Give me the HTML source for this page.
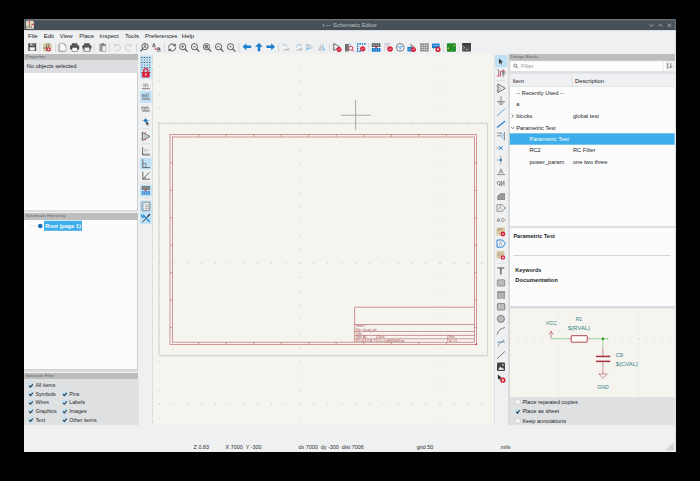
<!DOCTYPE html>
<html><head><meta charset="utf-8">
<style>
*{margin:0;padding:0;box-sizing:border-box}
html,body{width:700px;height:481px;overflow:hidden;background:#000}
body{position:relative;font-family:"Liberation Sans",sans-serif;color:#232629}
.a{position:absolute}
.t{position:absolute;white-space:nowrap;font-size:5.8px;line-height:1}
#win{position:absolute;left:24px;top:19px;width:651.6px;height:433px;background:#eff0f1;border-radius:2px 2px 0 0;overflow:hidden}
#title{position:absolute;left:0;top:0;width:651.6px;height:10.5px;background:#475057}
.hdr{position:absolute;background:#bcbebe;height:6.1px}
.hdr span{position:absolute;left:1.8px;top:1.1px;font-size:4.3px;color:#5c6064;white-space:nowrap;line-height:1}
svg{position:absolute}
</style></head><body>
<div id="win">
  <div id="title"></div>
</div>
<svg class="a" width="700" height="40" viewBox="0 0 700 40" style="left:0;top:0">
<path d="M24.5 29.6 V21.9 Q24.5 19.6 26.8 19.6 H673.2 Q675.1 19.6 675.1 21.9 V29.6" fill="none" stroke="#6d757b" stroke-width="1.1"/><rect x="25" y="20.3" width="650" height="0.8" fill="#565e64"/><rect x="24" y="30" width="651.6" height="1" fill="#dcdddf"/>
<rect x="25.9" y="20.8" width="8" height="8.2" rx="1.6" fill="#e2d9bd"/>
<path d="M29.4 21.2 V23.4 M31.6 24.4 H33.6" stroke="#e0305a" stroke-width="1.1"/>
<path d="M29.6 24 V26.4 L27.4 27.8 M26.2 26.6 H27.6 M31.4 26 V28.2" fill="none" stroke="#3d3d3d" stroke-width="0.6"/>
<circle cx="29.4" cy="27.6" r="0.5" fill="#e0305a"/>
<path d="M649.6 24.4 L651.5 26.4 L653.4 24.4" fill="none" stroke="#c5c9cc" stroke-width="0.75"/>
<path d="M658.4 26.2 L660.3 24.2 L662.2 26.2" fill="none" stroke="#c5c9cc" stroke-width="0.75"/>
<path d="M667.6 23.6 L671.2 27.2 M671.2 23.6 L667.6 27.2" fill="none" stroke="#c5c9cc" stroke-width="0.75"/>
</svg>

<div class="t" style="left:322.4px;top:23px;font-size:5.8px;color:#bfc3c7">t — Schematic Editor</div>

<div class="t" style="left:28px;top:32.5px;font-size:6px">File</div>
<div class="t" style="left:43.7px;top:32.5px;font-size:6px">Edit</div>
<div class="t" style="left:59.8px;top:32.5px;font-size:6px">View</div>
<div class="t" style="left:79.2px;top:32.5px;font-size:6px">Place</div>
<div class="t" style="left:99.4px;top:32.5px;font-size:6px">Inspect</div>
<div class="t" style="left:125px;top:32.5px;font-size:6px">Tools</div>
<div class="t" style="left:145px;top:32.5px;font-size:6px">Preferences</div>
<div class="t" style="left:181.8px;top:32.5px;font-size:6px">Help</div>

<svg class="a" width="700" height="60" viewBox="0 0 700 60" style="left:0;top:0">
<g transform="translate(27.9,43)"><rect x="0.3" y="0.3" width="8" height="7.8" rx="0.6" fill="#4d4d4d"/><rect x="1.7" y="4.3" width="5.2" height="3.2" fill="#f4f4f4"/><rect x="2.2" y="0.3" width="4.2" height="2.4" fill="#bdbdbd"/><rect x="4.6" y="0.6" width="1.1" height="1.6" fill="#333"/></g>
<rect x="39.5" y="43" width="0.8" height="9" fill="#d0d2d4"/>
<g transform="translate(42.9,43)"><rect x="0.2" y="0.2" width="8.6" height="8.4" rx="0.8" fill="#d8c9a3"/><g stroke="#333" stroke-width="0.6"><line x1="3.8" y1="0.5" x2="3.8" y2="8"/><line x1="0.5" y1="5" x2="3.8" y2="5"/><line x1="5.8" y1="0.5" x2="5.8" y2="4"/></g><circle cx="5.6" cy="6.4" r="2.1" fill="#d6203a"/><circle cx="5.6" cy="6.4" r="0.9" fill="#fff"/></g>
<rect x="55.3" y="43" width="0.8" height="9" fill="#d0d2d4"/>
<g transform="translate(58.3,43)"><path d="M0.4 1.4 V8.8 H6.6" fill="none" stroke="#9a9a9a" stroke-width="0.7"/><path d="M1.4 0.3 H5.8 L7.8 2.3 V8 H1.4 Z" fill="#fafafa" stroke="#8a8a8a" stroke-width="0.6"/><path d="M5.8 0.3 V2.3 H7.8" fill="none" stroke="#8a8a8a" stroke-width="0.6"/></g>
<g transform="translate(69.8,43)"><rect x="2" y="0.3" width="5.6" height="2.2" fill="#4d4d4d"/><rect x="0.2" y="2.3" width="9.2" height="4.2" rx="0.8" fill="#4d4d4d"/><rect x="2.2" y="4.4" width="5.2" height="4" fill="#fafafa" stroke="#444" stroke-width="0.5"/></g>
<g transform="translate(82.1,43)"><rect x="2" y="0.3" width="5.6" height="2.2" fill="#4d4d4d"/><rect x="0.2" y="2.3" width="9.2" height="3.6" rx="0.8" fill="#4d4d4d"/><rect x="0.4" y="5.6" width="8.8" height="2.8" fill="#b4b4b4"/><rect x="2.2" y="4.2" width="5.2" height="4.4" fill="#f0f0f0" stroke="#666" stroke-width="0.6"/></g>
<rect x="93.7" y="43" width="0.8" height="9" fill="#d0d2d4"/>
<g transform="translate(98.9,43)"><rect x="0.4" y="1" width="6.8" height="7.6" rx="0.5" fill="#9a9a9a"/><rect x="2.2" y="0.2" width="3.2" height="1.6" fill="#777"/><rect x="3.6" y="3" width="3.4" height="5.4" fill="#f6f6f6" stroke="#888" stroke-width="0.4"/></g>
<rect x="109.2" y="43" width="0.8" height="9" fill="#d0d2d4"/>
<g transform="translate(113.4,43)"><path d="M1.6 2.4 A3.2 3.2 0 1 1 2.2 7.4" fill="none" stroke="#c4c4c4" stroke-width="0.8"/><path d="M0.4 0.8 L1.8 3.6 L3.8 1.4" fill="none" stroke="#c4c4c4" stroke-width="0.8"/></g>
<g transform="translate(125.8,43)"><path d="M4.9 2.4 A3.2 3.2 0 1 0 4.3 7.4" fill="none" stroke="#c4c4c4" stroke-width="0.8"/><path d="M6.1 0.8 L4.7 3.6 L2.7 1.4" fill="none" stroke="#c4c4c4" stroke-width="0.8"/></g>
<rect x="136.2" y="43" width="0.8" height="9" fill="#d0d2d4"/>
<g transform="translate(140,43)"><circle cx="5" cy="3.6" r="3.1" fill="none" stroke="#4d4d4d" stroke-width="0.9"/><line x1="2.8" y1="5.8" x2="0.3" y2="8.4" stroke="#4d4d4d" stroke-width="1.2"/><path d="M3.6 5.2 L5 1.6 L6.4 5.2 M4.1 4 H5.9" fill="none" stroke="#4d4d4d" stroke-width="0.6"/></g>
<g transform="translate(152,43)"><path d="M0.4 4.2 L1.9 0.2 L3.4 4.2 M1 3 H2.8" fill="none" stroke="#4d4d4d" stroke-width="0.75"/><path d="M2.2 4.4 L3.8 6.4" fill="none" stroke="#d6203a" stroke-width="0.9"/><path d="M3 6.8 L4.8 7 L4.4 5.2 Z" fill="#d6203a"/><path d="M5.4 4.6 H7.2 Q8.3 4.6 8.3 5.6 Q8.3 6.4 7.4 6.5 Q8.6 6.6 8.6 7.5 Q8.6 8.6 7.3 8.6 H5.4 Z M6.2 5.4 V6.2 H7 Q7.5 6.2 7.5 5.8 Q7.5 5.4 7 5.4 Z M6.2 6.9 V7.9 H7.2 Q7.8 7.9 7.8 7.4 Q7.8 6.9 7.2 6.9 Z" fill="#4d4d4d" fill-rule="evenodd"/></g>
<rect x="164.1" y="43" width="0.8" height="9" fill="#d0d2d4"/>
<g transform="translate(167.6,43)"><path d="M0.9 4.6 A3.6 3.6 0 0 1 7.2 2.2" fill="none" stroke="#4d4d4d" stroke-width="0.9"/><path d="M8.2 0.6 L8 3.6 L5.2 3 Z" fill="#4d4d4d"/><path d="M8.1 4.4 A3.6 3.6 0 0 1 1.8 6.8" fill="none" stroke="#4d4d4d" stroke-width="0.9"/><path d="M0.8 8.4 L1 5.4 L3.8 6 Z" fill="#4d4d4d"/></g>
<g transform="translate(179,43)"><circle cx="3.7" cy="3.7" r="3.1" fill="none" stroke="#4d4d4d" stroke-width="0.9"/><line x1="5.9" y1="5.9" x2="8.6" y2="8.6" stroke="#4d4d4d" stroke-width="1.2"/><path d="M3.7 2.2 V5.2 M2.2 3.7 H5.2" stroke="#4d4d4d" stroke-width="0.7"/></g>
<g transform="translate(190.7,43)"><circle cx="3.7" cy="3.7" r="3.1" fill="none" stroke="#4d4d4d" stroke-width="0.9"/><line x1="5.9" y1="5.9" x2="8.6" y2="8.6" stroke="#4d4d4d" stroke-width="1.2"/><path d="M2.2 3.7 H5.2" stroke="#4d4d4d" stroke-width="0.7"/></g>
<g transform="translate(202.7,43)"><circle cx="3.7" cy="3.7" r="3.1" fill="none" stroke="#4d4d4d" stroke-width="0.9"/><line x1="5.9" y1="5.9" x2="8.6" y2="8.6" stroke="#4d4d4d" stroke-width="1.2"/><rect x="2.3" y="2.3" width="2.8" height="2.8" fill="#8a8a8a" stroke="#4d4d4d" stroke-width="0.4"/></g>
<g transform="translate(214.8,43)"><circle cx="3.7" cy="3.7" r="3.1" fill="none" stroke="#4d4d4d" stroke-width="0.9"/><line x1="5.9" y1="5.9" x2="8.6" y2="8.6" stroke="#4d4d4d" stroke-width="1.2"/><path d="M2 4.8 L3.2 3 L4.4 4 L5.4 3.2" fill="none" stroke="#4d4d4d" stroke-width="0.6"/></g>
<g transform="translate(226.8,43)"><circle cx="3.7" cy="3.7" r="3.1" fill="none" stroke="#4d4d4d" stroke-width="0.9"/><line x1="5.9" y1="5.9" x2="8.6" y2="8.6" stroke="#4d4d4d" stroke-width="1.2"/><path d="M2.8 2 L4.8 4 L3.4 4.4 Z" fill="#4d4d4d"/></g>
<rect x="238.6" y="43" width="0.8" height="9" fill="#d0d2d4"/>
<g transform="translate(242.6,43)"><path d="M0 3.7 L3.8 0.2 V2.4 H8.6 V5 H3.8 V7.2 Z" fill="#1a7ccc"/></g>
<g transform="translate(255,43)"><path d="M4 0 L7.8 3.8 H5.3 V8.3 H2.7 V3.8 H0.2 Z" fill="#1a7ccc"/></g>
<g transform="translate(266.2,43)"><path d="M8.8 3.7 L5 0.2 V2.4 H0.2 V5 H5 V7.2 Z" fill="#1a7ccc"/></g>
<rect x="278.2" y="43" width="0.8" height="9" fill="#d0d2d4"/>
<g transform="translate(281.8,43)"><path d="M0 7.6 L7.4 7.6 L7.4 5 Z" fill="#c4c4c4"/><path d="M5.6 4 A2.4 2.4 0 0 0 2.2 1.8" fill="none" stroke="#9cc8e8" stroke-width="0.8"/><path d="M1.2 0.6 L2.2 2.6 L3.4 1" fill="none" stroke="#9cc8e8" stroke-width="0.7"/></g>
<g transform="translate(294.4,43)"><path d="M0.4 7.6 L7.8 7.6 L7.8 4.6 Z" fill="#c4c4c4"/><path d="M2 4.6 A2.4 2.4 0 0 1 5.8 2" fill="none" stroke="#9cc8e8" stroke-width="0.8"/><path d="M6.8 0.6 L5.8 2.6 L4.4 1.2" fill="none" stroke="#9cc8e8" stroke-width="0.7"/></g>
<g transform="translate(305.8,43)"><path d="M0 0.4 L7.6 3.6 H0 Z" fill="#c4c4c4"/><path d="M0 4.6 H7.6 L0 7.8 Z" fill="#9cc8e8"/></g>
<g transform="translate(318,43)"><path d="M3.2 0 L0 7.8 H3.2 Z" fill="#c4c4c4"/><path d="M4.2 0 L7.4 7.8 H4.2 Z" fill="#9cc8e8"/></g>
<rect x="329.1" y="43" width="0.8" height="9" fill="#d0d2d4"/>
<g transform="translate(332.6,43)"><path d="M1.2 0.4 L7 4 L1.2 7.6 Z" fill="none" stroke="#4d4d4d" stroke-width="0.8"/><g stroke="#4d4d4d" stroke-width="0.6"><line x1="0" y1="2" x2="1.2" y2="2"/><line x1="0" y1="6" x2="1.2" y2="6"/></g><circle cx="6.4" cy="6.4" r="2.5" fill="#d6203a"/><line x1="5.4" y1="7.4" x2="7.4" y2="5.4" stroke="#fff" stroke-width="0.7"/></g>
<g transform="translate(345,43)"><rect x="0.2" y="1" width="1.6" height="7.4" fill="#4d4d4d"/><rect x="2.2" y="1" width="1.6" height="7.4" fill="#666"/><circle cx="5.8" cy="5.2" r="2" fill="#fff" stroke="#d6203a" stroke-width="0.9"/><line x1="7.2" y1="6.6" x2="8.6" y2="8.4" stroke="#d6203a" stroke-width="1"/><path d="M4.6 0.4 L5.6 2.6" stroke="#1a7ccc" stroke-width="0.6"/></g>
<g transform="translate(356.7,43)"><circle cx="1" cy="0.9" r="0.85" fill="#1a7ccc"/><circle cx="3.4" cy="0.9" r="0.85" fill="#1a7ccc"/><circle cx="5.8" cy="0.9" r="0.85" fill="#1a7ccc"/><circle cx="8.2" cy="0.9" r="0.85" fill="#1a7ccc"/><circle cx="1" cy="3.4" r="0.85" fill="#1a7ccc"/><circle cx="1" cy="5.8" r="0.85" fill="#1a7ccc"/><circle cx="1" cy="8.2" r="0.85" fill="#1a7ccc"/><circle cx="3.4" cy="8.2" r="0.85" fill="#1a7ccc"/><circle cx="6" cy="5.8" r="2.6" fill="#d6203a"/><line x1="5" y1="6.8" x2="7" y2="4.8" stroke="#fff" stroke-width="0.7"/></g>
<rect x="368.3" y="43" width="0.8" height="9" fill="#d0d2d4"/>
<g transform="translate(371.6,43)"><rect x="0.2" y="0.2" width="8.6" height="3.8" fill="#4d4d4d"/><g stroke="#eee" stroke-width="0.4"><line x1="2.4" y1="0.2" x2="2.4" y2="4"/><line x1="4.6" y1="0.2" x2="4.6" y2="4"/><line x1="6.8" y1="0.2" x2="6.8" y2="4"/><line x1="0.2" y1="2.1" x2="8.8" y2="2.1"/></g><rect x="0.2" y="5" width="8.6" height="3.8" fill="#1a7ccc"/><g stroke="#cde" stroke-width="0.4"><line x1="2.4" y1="5" x2="2.4" y2="8.8"/><line x1="4.6" y1="5" x2="4.6" y2="8.8"/><line x1="6.8" y1="5" x2="6.8" y2="8.8"/></g><circle cx="4.5" cy="4.4" r="0.9" fill="#d6203a"/></g>
<g transform="translate(384,43)"><g stroke="#888" stroke-width="0.6"><line x1="0.2" y1="0.8" x2="1.4" y2="0.8"/><line x1="0.2" y1="2.8" x2="1.4" y2="2.8"/><line x1="0.2" y1="4.8" x2="1.4" y2="4.8"/><line x1="0.2" y1="6.8" x2="1.4" y2="6.8"/><line x1="2" y1="0.8" x2="6" y2="0.8"/><line x1="2" y1="2.8" x2="4" y2="2.8"/></g><circle cx="6" cy="6" r="2.8" fill="#d6203a"/><path d="M4.6 6 L5.6 7 L7.4 5" fill="none" stroke="#fff" stroke-width="0.6"/></g>
<g transform="translate(395.8,43)"><circle cx="4.4" cy="4.3" r="3.9" fill="#fafafa" stroke="#666" stroke-width="0.8"/><path d="M1.4 4.6 Q2.4 2 3.4 4.4 T5.4 4.2 T7.4 4" fill="none" stroke="#1a7ccc" stroke-width="0.7"/><line x1="4.4" y1="1" x2="4.4" y2="7.6" stroke="#1a7ccc" stroke-width="0.4"/></g>
<g transform="translate(407.2,43)"><path d="M3 0.2 L7.6 3.4 L3 5 Z" fill="#aaa"/><rect x="0.2" y="4" width="4.6" height="4.4" fill="#1a7ccc"/><line x1="0.6" y1="6.2" x2="4.4" y2="6.2" stroke="#cfe3f3" stroke-width="0.5"/><circle cx="6.2" cy="6.4" r="2.5" fill="#d6203a"/><line x1="5.2" y1="7.4" x2="7.2" y2="5.4" stroke="#fff" stroke-width="0.7"/></g>
<g transform="translate(420,43)"><rect x="0.2" y="0.4" width="8.4" height="8" fill="#777"/><line x1="2.3" y1="0.4" x2="2.3" y2="8.4" stroke="#eee" stroke-width="0.5"/><line x1="4.4" y1="0.4" x2="4.4" y2="8.4" stroke="#eee" stroke-width="0.5"/><line x1="6.5" y1="0.4" x2="6.5" y2="8.4" stroke="#eee" stroke-width="0.5"/><line x1="0.2" y1="2.4" x2="8.6" y2="2.4" stroke="#eee" stroke-width="0.5"/><line x1="0.2" y1="4.4" x2="8.6" y2="4.4" stroke="#eee" stroke-width="0.5"/><line x1="0.2" y1="6.4" x2="8.6" y2="6.4" stroke="#eee" stroke-width="0.5"/></g>
<g transform="translate(431.8,43)"><rect x="0.2" y="0.6" width="7.6" height="4.4" rx="0.6" fill="#1a7ccc"/><line x1="1.2" y1="2.4" x2="6.6" y2="2.4" stroke="#bfe0f6" stroke-width="0.6"/><path d="M1.2 5 L1.2 6.2 L2.6 5" fill="#1a7ccc"/><circle cx="6.2" cy="6.4" r="2.6" fill="#d6203a"/><path d="M5.2 5.4 H7.2 L6.8 7.4 H5.6 Z" fill="#fff"/></g>
<rect x="443.2" y="43" width="0.8" height="9" fill="#d0d2d4"/>
<g transform="translate(446.7,43)"><rect x="0.2" y="0.2" width="9" height="8.6" rx="0.8" fill="#1f8a2a"/><path d="M1.2 5.2 L3.6 3 V0.6 M7.4 2.6 L5.4 4.4 V8.6" fill="none" stroke="#5cc25a" stroke-width="0.4"/><circle cx="1.6" cy="5.4" r="0.8" fill="#f2c230"/><circle cx="7.4" cy="2.6" r="0.8" fill="#f2c230"/></g>
<rect x="458.6" y="43" width="0.8" height="9" fill="#d0d2d4"/>
<g transform="translate(462,43)"><rect x="0.2" y="0.2" width="8.8" height="8.4" rx="0.6" fill="#4a4a4a"/><rect x="0.2" y="0.2" width="8.8" height="1.6" fill="#333"/><path d="M1.4 3.6 L2.8 4.8 L1.4 6" fill="none" stroke="#ddd" stroke-width="0.6"/><line x1="3.6" y1="6.4" x2="6.4" y2="6.4" stroke="#ddd" stroke-width="0.6"/></g>
</svg>

<div class="hdr" style="left:24px;top:54px;width:113.6px"><span>Properties</span></div>
<div class="a" style="left:24px;top:60.1px;width:113.6px;height:12.5px;background:#dcdde0"></div>
<div class="t" style="left:26.8px;top:63.6px;font-size:5.7px">No objects selected</div>
<div class="a" style="left:24px;top:72.6px;width:113.6px;height:137.6px;background:#fcfcfc;border-right:0.7px solid #cdced0"></div>
<div class="a" style="left:24px;top:210.2px;width:113.6px;height:1.4px;background:#dcdddf"></div>

<div class="hdr" style="left:24px;top:213.3px;width:113.6px;height:6.3px"><span>Schematic Hierarchy</span></div>
<div class="a" style="left:24px;top:219.6px;width:113.6px;height:150.8px;background:#fcfcfc;border-right:0.7px solid #cdced0;border-bottom:0.7px solid #cdced0"></div>
<div class="a" style="left:24px;top:370.4px;width:113.6px;height:1.2px;background:#dcdddf"></div>

<div class="hdr" style="left:24px;top:372.9px;width:113.6px"><span>Selection Filter</span></div>
<div class="a" style="left:24px;top:378.9px;width:114.8px;height:45.9px;background:#dfe0e2"></div>

<div class="a" style="left:152.4px;top:53.6px;width:342px;height:371px;background:#f5f4ef"></div>
<svg class="a" width="700" height="481" viewBox="0 0 700 481" style="left:0;top:0">
<defs><pattern id="gd" x="158.6" y="51.60" width="14.04" height="14.08" patternUnits="userSpaceOnUse"><rect x="0" y="0" width="1.2" height="1.2" fill="#edece7"/></pattern>
<clipPath id="cv"><rect x="153" y="54" width="341.5" height="370.6"/></clipPath></defs>
<g clip-path="url(#cv)">
<rect x="153" y="54" width="341.5" height="370.6" fill="url(#gd)"/>
<g fill="#d6d5d1"><rect x="158.60" y="65.68" width="1.2" height="1.2"/><rect x="158.60" y="79.76" width="1.2" height="1.2"/><rect x="158.60" y="93.84" width="1.2" height="1.2"/><rect x="158.60" y="107.92" width="1.2" height="1.2"/><rect x="158.60" y="122.00" width="1.2" height="1.2"/><rect x="158.60" y="136.08" width="1.2" height="1.2"/><rect x="158.60" y="150.16" width="1.2" height="1.2"/><rect x="158.60" y="164.24" width="1.2" height="1.2"/><rect x="158.60" y="178.32" width="1.2" height="1.2"/><rect x="158.60" y="192.40" width="1.2" height="1.2"/><rect x="158.60" y="206.48" width="1.2" height="1.2"/><rect x="158.60" y="220.56" width="1.2" height="1.2"/><rect x="158.60" y="234.64" width="1.2" height="1.2"/><rect x="158.60" y="248.72" width="1.2" height="1.2"/><rect x="158.60" y="262.80" width="1.2" height="1.2"/><rect x="158.60" y="276.88" width="1.2" height="1.2"/><rect x="158.60" y="290.96" width="1.2" height="1.2"/><rect x="158.60" y="305.04" width="1.2" height="1.2"/><rect x="158.60" y="319.12" width="1.2" height="1.2"/><rect x="158.60" y="333.20" width="1.2" height="1.2"/><rect x="158.60" y="347.28" width="1.2" height="1.2"/><rect x="158.60" y="361.36" width="1.2" height="1.2"/><rect x="158.60" y="375.44" width="1.2" height="1.2"/><rect x="158.60" y="389.52" width="1.2" height="1.2"/><rect x="158.60" y="403.60" width="1.2" height="1.2"/><rect x="158.60" y="417.68" width="1.2" height="1.2"/><rect x="299.00" y="65.68" width="1.2" height="1.2"/><rect x="299.00" y="79.76" width="1.2" height="1.2"/><rect x="299.00" y="93.84" width="1.2" height="1.2"/><rect x="299.00" y="107.92" width="1.2" height="1.2"/><rect x="299.00" y="122.00" width="1.2" height="1.2"/><rect x="299.00" y="136.08" width="1.2" height="1.2"/><rect x="299.00" y="150.16" width="1.2" height="1.2"/><rect x="299.00" y="164.24" width="1.2" height="1.2"/><rect x="299.00" y="178.32" width="1.2" height="1.2"/><rect x="299.00" y="192.40" width="1.2" height="1.2"/><rect x="299.00" y="206.48" width="1.2" height="1.2"/><rect x="299.00" y="220.56" width="1.2" height="1.2"/><rect x="299.00" y="234.64" width="1.2" height="1.2"/><rect x="299.00" y="248.72" width="1.2" height="1.2"/><rect x="299.00" y="262.80" width="1.2" height="1.2"/><rect x="299.00" y="276.88" width="1.2" height="1.2"/><rect x="299.00" y="290.96" width="1.2" height="1.2"/><rect x="299.00" y="305.04" width="1.2" height="1.2"/><rect x="299.00" y="319.12" width="1.2" height="1.2"/><rect x="299.00" y="333.20" width="1.2" height="1.2"/><rect x="299.00" y="347.28" width="1.2" height="1.2"/><rect x="299.00" y="361.36" width="1.2" height="1.2"/><rect x="299.00" y="375.44" width="1.2" height="1.2"/><rect x="299.00" y="389.52" width="1.2" height="1.2"/><rect x="299.00" y="403.60" width="1.2" height="1.2"/><rect x="299.00" y="417.68" width="1.2" height="1.2"/><rect x="439.40" y="65.68" width="1.2" height="1.2"/><rect x="439.40" y="79.76" width="1.2" height="1.2"/><rect x="439.40" y="93.84" width="1.2" height="1.2"/><rect x="439.40" y="107.92" width="1.2" height="1.2"/><rect x="439.40" y="122.00" width="1.2" height="1.2"/><rect x="439.40" y="136.08" width="1.2" height="1.2"/><rect x="439.40" y="150.16" width="1.2" height="1.2"/><rect x="439.40" y="164.24" width="1.2" height="1.2"/><rect x="439.40" y="178.32" width="1.2" height="1.2"/><rect x="439.40" y="192.40" width="1.2" height="1.2"/><rect x="439.40" y="206.48" width="1.2" height="1.2"/><rect x="439.40" y="220.56" width="1.2" height="1.2"/><rect x="439.40" y="234.64" width="1.2" height="1.2"/><rect x="439.40" y="248.72" width="1.2" height="1.2"/><rect x="439.40" y="262.80" width="1.2" height="1.2"/><rect x="439.40" y="276.88" width="1.2" height="1.2"/><rect x="439.40" y="290.96" width="1.2" height="1.2"/><rect x="439.40" y="305.04" width="1.2" height="1.2"/><rect x="439.40" y="319.12" width="1.2" height="1.2"/><rect x="439.40" y="333.20" width="1.2" height="1.2"/><rect x="439.40" y="347.28" width="1.2" height="1.2"/><rect x="439.40" y="361.36" width="1.2" height="1.2"/><rect x="439.40" y="375.44" width="1.2" height="1.2"/><rect x="439.40" y="389.52" width="1.2" height="1.2"/><rect x="439.40" y="403.60" width="1.2" height="1.2"/><rect x="439.40" y="417.68" width="1.2" height="1.2"/><rect x="158.60" y="122.00" width="1.2" height="1.2"/><rect x="172.64" y="122.00" width="1.2" height="1.2"/><rect x="186.68" y="122.00" width="1.2" height="1.2"/><rect x="200.72" y="122.00" width="1.2" height="1.2"/><rect x="214.76" y="122.00" width="1.2" height="1.2"/><rect x="228.80" y="122.00" width="1.2" height="1.2"/><rect x="242.84" y="122.00" width="1.2" height="1.2"/><rect x="256.88" y="122.00" width="1.2" height="1.2"/><rect x="270.92" y="122.00" width="1.2" height="1.2"/><rect x="284.96" y="122.00" width="1.2" height="1.2"/><rect x="299.00" y="122.00" width="1.2" height="1.2"/><rect x="313.04" y="122.00" width="1.2" height="1.2"/><rect x="327.08" y="122.00" width="1.2" height="1.2"/><rect x="341.12" y="122.00" width="1.2" height="1.2"/><rect x="355.16" y="122.00" width="1.2" height="1.2"/><rect x="369.20" y="122.00" width="1.2" height="1.2"/><rect x="383.24" y="122.00" width="1.2" height="1.2"/><rect x="397.28" y="122.00" width="1.2" height="1.2"/><rect x="411.32" y="122.00" width="1.2" height="1.2"/><rect x="425.36" y="122.00" width="1.2" height="1.2"/><rect x="439.40" y="122.00" width="1.2" height="1.2"/><rect x="453.44" y="122.00" width="1.2" height="1.2"/><rect x="467.48" y="122.00" width="1.2" height="1.2"/><rect x="481.52" y="122.00" width="1.2" height="1.2"/><rect x="158.60" y="262.80" width="1.2" height="1.2"/><rect x="172.64" y="262.80" width="1.2" height="1.2"/><rect x="186.68" y="262.80" width="1.2" height="1.2"/><rect x="200.72" y="262.80" width="1.2" height="1.2"/><rect x="214.76" y="262.80" width="1.2" height="1.2"/><rect x="228.80" y="262.80" width="1.2" height="1.2"/><rect x="242.84" y="262.80" width="1.2" height="1.2"/><rect x="256.88" y="262.80" width="1.2" height="1.2"/><rect x="270.92" y="262.80" width="1.2" height="1.2"/><rect x="284.96" y="262.80" width="1.2" height="1.2"/><rect x="299.00" y="262.80" width="1.2" height="1.2"/><rect x="313.04" y="262.80" width="1.2" height="1.2"/><rect x="327.08" y="262.80" width="1.2" height="1.2"/><rect x="341.12" y="262.80" width="1.2" height="1.2"/><rect x="355.16" y="262.80" width="1.2" height="1.2"/><rect x="369.20" y="262.80" width="1.2" height="1.2"/><rect x="383.24" y="262.80" width="1.2" height="1.2"/><rect x="397.28" y="262.80" width="1.2" height="1.2"/><rect x="411.32" y="262.80" width="1.2" height="1.2"/><rect x="425.36" y="262.80" width="1.2" height="1.2"/><rect x="439.40" y="262.80" width="1.2" height="1.2"/><rect x="453.44" y="262.80" width="1.2" height="1.2"/><rect x="467.48" y="262.80" width="1.2" height="1.2"/><rect x="481.52" y="262.80" width="1.2" height="1.2"/><rect x="158.60" y="403.60" width="1.2" height="1.2"/><rect x="172.64" y="403.60" width="1.2" height="1.2"/><rect x="186.68" y="403.60" width="1.2" height="1.2"/><rect x="200.72" y="403.60" width="1.2" height="1.2"/><rect x="214.76" y="403.60" width="1.2" height="1.2"/><rect x="228.80" y="403.60" width="1.2" height="1.2"/><rect x="242.84" y="403.60" width="1.2" height="1.2"/><rect x="256.88" y="403.60" width="1.2" height="1.2"/><rect x="270.92" y="403.60" width="1.2" height="1.2"/><rect x="284.96" y="403.60" width="1.2" height="1.2"/><rect x="299.00" y="403.60" width="1.2" height="1.2"/><rect x="313.04" y="403.60" width="1.2" height="1.2"/><rect x="327.08" y="403.60" width="1.2" height="1.2"/><rect x="341.12" y="403.60" width="1.2" height="1.2"/><rect x="355.16" y="403.60" width="1.2" height="1.2"/><rect x="369.20" y="403.60" width="1.2" height="1.2"/><rect x="383.24" y="403.60" width="1.2" height="1.2"/><rect x="397.28" y="403.60" width="1.2" height="1.2"/><rect x="411.32" y="403.60" width="1.2" height="1.2"/><rect x="425.36" y="403.60" width="1.2" height="1.2"/><rect x="439.40" y="403.60" width="1.2" height="1.2"/><rect x="453.44" y="403.60" width="1.2" height="1.2"/><rect x="467.48" y="403.60" width="1.2" height="1.2"/><rect x="481.52" y="403.60" width="1.2" height="1.2"/></g>
<rect x="159" y="123.3" width="328.6" height="232" fill="none" stroke="#cfcfcb" stroke-width="0.9"/>
<line x1="160" y1="356.2" x2="488" y2="356.2" stroke="#e2e2de" stroke-width="1"/>
<g fill="none" stroke="#bf7070" stroke-width="0.7">
<rect x="170" y="134.6" width="306.5" height="209.9"/>
<rect x="172.4" y="137" width="302.2" height="205.2"/>
<line x1="198.6" y1="134.6" x2="198.6" y2="137"/>
<line x1="198.6" y1="342" x2="198.6" y2="344.5"/>
<line x1="226.1" y1="134.6" x2="226.1" y2="137"/>
<line x1="226.1" y1="342" x2="226.1" y2="344.5"/>
<line x1="253.7" y1="134.6" x2="253.7" y2="137"/>
<line x1="253.7" y1="342" x2="253.7" y2="344.5"/>
<line x1="281.2" y1="134.6" x2="281.2" y2="137"/>
<line x1="281.2" y1="342" x2="281.2" y2="344.5"/>
<line x1="308.7" y1="134.6" x2="308.7" y2="137"/>
<line x1="308.7" y1="342" x2="308.7" y2="344.5"/>
<line x1="336.2" y1="134.6" x2="336.2" y2="137"/>
<line x1="336.2" y1="342" x2="336.2" y2="344.5"/>
<line x1="363.8" y1="134.6" x2="363.8" y2="137"/>
<line x1="363.8" y1="342" x2="363.8" y2="344.5"/>
<line x1="391.3" y1="134.6" x2="391.3" y2="137"/>
<line x1="391.3" y1="342" x2="391.3" y2="344.5"/>
<line x1="418.8" y1="134.6" x2="418.8" y2="137"/>
<line x1="418.8" y1="342" x2="418.8" y2="344.5"/>
<line x1="446.4" y1="134.6" x2="446.4" y2="137"/>
<line x1="446.4" y1="342" x2="446.4" y2="344.5"/>
<line x1="170" y1="162.9" x2="172.4" y2="162.9"/>
<line x1="474.4" y1="162.9" x2="476.5" y2="162.9"/>
<line x1="170" y1="190.3" x2="172.4" y2="190.3"/>
<line x1="474.4" y1="190.3" x2="476.5" y2="190.3"/>
<line x1="170" y1="217.8" x2="172.4" y2="217.8"/>
<line x1="474.4" y1="217.8" x2="476.5" y2="217.8"/>
<line x1="170" y1="245.2" x2="172.4" y2="245.2"/>
<line x1="474.4" y1="245.2" x2="476.5" y2="245.2"/>
<line x1="170" y1="272.7" x2="172.4" y2="272.7"/>
<line x1="474.4" y1="272.7" x2="476.5" y2="272.7"/>
<line x1="170" y1="300.1" x2="172.4" y2="300.1"/>
<line x1="474.4" y1="300.1" x2="476.5" y2="300.1"/>
<line x1="170" y1="327.6" x2="172.4" y2="327.6"/>
<line x1="474.4" y1="327.6" x2="476.5" y2="327.6"/>
<polyline points="354.6,342 354.6,307.2 474.4,307.2"/>
<line x1="354.6" y1="324.5" x2="474.4" y2="324.5"/>
<line x1="354.6" y1="331.5" x2="474.4" y2="331.5"/>
<line x1="354.6" y1="335.4" x2="474.4" y2="335.4"/>
<line x1="354.6" y1="338.8" x2="474.4" y2="338.8"/>
<line x1="376.7" y1="335.4" x2="376.7" y2="338.8"/>
<line x1="447.8" y1="335.4" x2="447.8" y2="342.2"/>
</g>
<rect x="475.6" y="343.6" width="1.6" height="1.6" fill="#b04848"/>
<text x="356" y="327.3" font-family="Liberation Sans" font-size="2.9" fill="#9c4444">Sheet: /</text>
<text x="356" y="330.6" font-family="Liberation Sans" font-size="2.9" fill="#9c4444">File: t.kicad_sch</text>
<text x="356" y="334.6" font-family="Liberation Sans" font-size="2.9" fill="#9c4444">Title:</text>
<text x="356" y="338.2" font-family="Liberation Sans" font-size="2.9" fill="#9c4444">Size: A4</text>
<text x="378" y="338.2" font-family="Liberation Sans" font-size="2.9" fill="#9c4444">Date:</text>
<text x="356" y="341.6" font-family="Liberation Sans" font-size="2.9" fill="#9c4444">KiCad E.D.A. 9.0.0-rc1-gb6f1b0e3-pq</text>
<text x="449" y="338.2" font-family="Liberation Sans" font-size="2.9" fill="#9c4444">Rev:</text>
<text x="449" y="341.6" font-family="Liberation Sans" font-size="2.9" fill="#9c4444">Id: 1/1</text>
<g stroke="#9c9c9c" stroke-width="0.85"><line x1="355.6" y1="100" x2="355.6" y2="130"/><line x1="341" y1="115.2" x2="370.7" y2="115.2"/></g>
</g></svg>
<svg class="a" width="700" height="481" viewBox="0 0 700 481" style="left:0;top:0">
<rect x="138.8" y="54" width="13.8" height="371" fill="#eff0f1"/>
<rect x="152" y="54" width="0.8" height="371" fill="#d9dadb"/>
<rect x="140" y="55.5" width="11.6" height="11.6" fill="#bfe1f6"/>
<rect x="140" y="67.1" width="11.6" height="11.5" fill="#bfe1f6"/>
<rect x="140" y="91.2" width="11.6" height="11.6" fill="#bfe1f6"/>
<rect x="140" y="158" width="11.6" height="11.2" fill="#bfe1f6"/>
<rect x="140" y="184.8" width="11.6" height="11.6" fill="#bfe1f6"/>
<rect x="140" y="200.6" width="11.6" height="11.6" fill="#bfe1f6"/>
<rect x="140" y="212.2" width="11.6" height="11.6" fill="#bfe1f6"/>
<rect x="141.2" y="57.1" width="1.4" height="0.9" fill="#4a4f55"/><rect x="141.2" y="62.1" width="1.4" height="0.9" fill="#4a4f55"/><rect x="141.2" y="67.1" width="1.4" height="0.9" fill="#4a4f55"/><rect x="141.2" y="72.1" width="1.4" height="0.9" fill="#4a4f55"/><rect x="141.5" y="59.1" width="0.8" height="2" fill="#8e9aa4"/><rect x="141.5" y="64.1" width="0.8" height="2" fill="#8e9aa4"/><rect x="141.5" y="69.1" width="0.8" height="2" fill="#8e9aa4"/><rect x="141.5" y="74.1" width="0.8" height="2" fill="#8e9aa4"/><rect x="143.8" y="57.1" width="1.4" height="0.9" fill="#4a4f55"/><rect x="143.8" y="62.1" width="1.4" height="0.9" fill="#4a4f55"/><rect x="143.8" y="67.1" width="1.4" height="0.9" fill="#4a4f55"/><rect x="143.8" y="72.1" width="1.4" height="0.9" fill="#4a4f55"/><rect x="144.10000000000002" y="59.1" width="0.8" height="2" fill="#8e9aa4"/><rect x="144.10000000000002" y="64.1" width="0.8" height="2" fill="#8e9aa4"/><rect x="144.10000000000002" y="69.1" width="0.8" height="2" fill="#8e9aa4"/><rect x="144.10000000000002" y="74.1" width="0.8" height="2" fill="#8e9aa4"/><rect x="146.4" y="57.1" width="1.4" height="0.9" fill="#4a4f55"/><rect x="146.4" y="62.1" width="1.4" height="0.9" fill="#4a4f55"/><rect x="146.4" y="67.1" width="1.4" height="0.9" fill="#4a4f55"/><rect x="146.4" y="72.1" width="1.4" height="0.9" fill="#4a4f55"/><rect x="146.70000000000002" y="59.1" width="0.8" height="2" fill="#8e9aa4"/><rect x="146.70000000000002" y="64.1" width="0.8" height="2" fill="#8e9aa4"/><rect x="146.70000000000002" y="69.1" width="0.8" height="2" fill="#8e9aa4"/><rect x="146.70000000000002" y="74.1" width="0.8" height="2" fill="#8e9aa4"/><rect x="149.0" y="57.1" width="1.4" height="0.9" fill="#4a4f55"/><rect x="149.0" y="62.1" width="1.4" height="0.9" fill="#4a4f55"/><rect x="149.0" y="67.1" width="1.4" height="0.9" fill="#4a4f55"/><rect x="149.0" y="72.1" width="1.4" height="0.9" fill="#4a4f55"/><rect x="149.3" y="59.1" width="0.8" height="2" fill="#8e9aa4"/><rect x="149.3" y="64.1" width="0.8" height="2" fill="#8e9aa4"/><rect x="149.3" y="69.1" width="0.8" height="2" fill="#8e9aa4"/><rect x="149.3" y="74.1" width="0.8" height="2" fill="#8e9aa4"/>
<path d="M143.7 72.2 V70.8 A2.15 2.15 0 0 1 148 70.8 V72.2" fill="none" stroke="#d6203a" stroke-width="1.1"/>
<rect x="142.2" y="71.8" width="7.3" height="5.7" rx="0.4" fill="#d6203a"/><circle cx="145.85" cy="74" r="0.7" fill="#fff"/><rect x="145.5" y="74" width="0.7" height="1.9" fill="#fff"/>
<path d="M143.9 82.8 V83.4 M143.9 84.2 V87 M145.4 84.2 V87 M145.4 85 Q145.8 84.1 146.8 84.1 Q147.8 84.1 147.8 85.2 V87" fill="none" stroke="#4d4d4d" stroke-width="0.55"/>
<rect x="142.2" y="87.9" width="7.4" height="1.3" fill="#777"/><rect x="143" y="88.3" width="5.8" height="0.5" fill="#bbb"/>
<path d="M142.4 97.6 V94.4 M142.4 95 Q143.2 94.2 143.8 94.8 V97.6 M143.8 95 Q144.6 94.2 145.2 94.8 V97.6 M146.4 93.4 V93.9 M146.4 94.4 V97.6 M148.2 93 V97.6" fill="none" stroke="#4d4d4d" stroke-width="0.55"/>
<rect x="142.2" y="98.5" width="7.4" height="1.3" fill="#777"/><rect x="143" y="98.9" width="5.8" height="0.5" fill="#bbb"/>
<path d="M141.8 109.6 V106.8 M141.8 107.3 Q142.6 106.5 143.1 107.1 V109.6 M143.1 107.3 Q143.9 106.5 144.5 107.1 V109.6 M145.6 109.6 V106.8 M145.6 107.3 Q146.4 106.5 146.9 107.1 V109.6 M146.9 107.3 Q147.7 106.5 148.3 107.1 V109.6" fill="none" stroke="#4d4d4d" stroke-width="0.5"/>
<rect x="142.2" y="110.2" width="7.4" height="1.3" fill="#777"/><rect x="143" y="110.6" width="5.8" height="0.5" fill="#bbb"/>
<line x1="145.6" y1="116.6" x2="145.6" y2="125.6" stroke="#bbb" stroke-width="0.5"/><line x1="141.4" y1="120.6" x2="150" y2="120.6" stroke="#bbb" stroke-width="0.5"/>
<path d="M145.6 118.4 L148 120.6 L145.6 122.6 L143.2 120.6 Z" fill="#1a7ccc"/>
<path d="M146.4 121.2 L149.2 123.4 L147.8 123.6 L148.6 125.4 L147.8 125.8 L147 124 L146.2 125 Z" fill="#333"/>
<rect x="142" y="128.2" width="7.6" height="0.6" fill="#d4d5d6"/>
<rect x="142" y="143.6" width="7.6" height="0.6" fill="#d4d5d6"/>
<rect x="142" y="182.79999999999998" width="7.6" height="0.6" fill="#d4d5d6"/>
<rect x="142" y="197.7" width="7.6" height="0.6" fill="#d4d5d6"/>
<path d="M142.4 132.2 L150 136.4 L142.4 140.6 Z" fill="#ccc" stroke="#4d4d4d" stroke-width="0.7"/>
<line x1="141.2" y1="134" x2="142.4" y2="134" stroke="#4d4d4d" stroke-width="0.6"/><line x1="141.2" y1="138.8" x2="142.4" y2="138.8" stroke="#4d4d4d" stroke-width="0.6"/>
<circle cx="145.4" cy="132.8" r="0.6" fill="#d6203a"/><circle cx="145.4" cy="139.6" r="0.6" fill="#d6203a"/>
<path d="M142.6 147 V155 H150" fill="none" stroke="#4d4d4d" stroke-width="0.8"/><line x1="141.6" y1="154" x2="150" y2="154" stroke="#4d4d4d" stroke-width="0.4"/>
<path d="M144 152 L145.4 148.6 L146.6 151.4 L147.8 149.6 L149.4 150.4" fill="none" stroke="#999" stroke-width="0.5"/>
<path d="M142.8 159.2 V167.6 H150" fill="none" stroke="#4d4d4d" stroke-width="0.8"/><path d="M142.8 163.4 H145.8 V167.6" fill="none" stroke="#4d4d4d" stroke-width="0.6"/>
<path d="M142.8 171.6 V179.2 H150 M142.8 179.2 L149.4 172.4" fill="none" stroke="#4d4d4d" stroke-width="0.8"/><path d="M145 177 A2.4 2.4 0 0 1 145.2 179.2" fill="none" stroke="#4d4d4d" stroke-width="0.5"/>
<rect x="141.8" y="186.2" width="8" height="3.6" fill="#555"/><g stroke="#ddd" stroke-width="0.4"><line x1="143.8" y1="186.2" x2="143.8" y2="189.8"/><line x1="145.8" y1="186.2" x2="145.8" y2="189.8"/><line x1="147.8" y1="186.2" x2="147.8" y2="189.8"/><line x1="141.8" y1="188" x2="149.8" y2="188"/></g>
<rect x="141.8" y="191" width="8" height="4" fill="#3f8fd4"/><g stroke="#e2eef8" stroke-width="0.5"><line x1="143.8" y1="191" x2="143.8" y2="195"/><line x1="145.8" y1="191" x2="145.8" y2="195"/><line x1="147.8" y1="191" x2="147.8" y2="195"/></g><circle cx="145.6" cy="190.4" r="0.8" fill="#d6203a"/>
<rect x="142" y="202.2" width="7.8" height="8.4" rx="0.5" fill="#f2f2f2" stroke="#666" stroke-width="0.7"/>
<g stroke="#666" stroke-width="0.5"><line x1="144.8" y1="204.8" x2="149" y2="204.8"/><line x1="144.8" y1="206.6" x2="149" y2="206.6"/><line x1="144.8" y1="208.4" x2="149" y2="208.4"/></g>
<g stroke="#1a7ccc" stroke-width="0.6"><line x1="143.4" y1="203.8" x2="143.4" y2="205.2"/><line x1="143.4" y1="206.2" x2="143.4" y2="207.4"/><line x1="143.4" y1="208.2" x2="143.4" y2="209.6"/></g>
<line x1="142.6" y1="222.2" x2="149.6" y2="214.4" stroke="#444" stroke-width="1"/><line x1="147.6" y1="216.6" x2="149.8" y2="214.2" stroke="#333" stroke-width="1.4"/>
<line x1="143" y1="214.6" x2="149.6" y2="221.8" stroke="#1a7ccc" stroke-width="1.2"/><path d="M141.6 214.8 A1.8 1.8 0 0 0 144.4 216.8" fill="none" stroke="#1a7ccc" stroke-width="1.2"/>
</svg>
<svg class="a" width="700" height="481" viewBox="0 0 700 481" style="left:0;top:0">
<rect x="494.6" y="54" width="13.8" height="371.5" fill="#eff0f1"/>
<rect x="494.2" y="54" width="0.7" height="371.5" fill="#d9dadb"/>
<rect x="507.9" y="54" width="1.4" height="371.5" fill="#dcddde"/>
<rect x="495.6" y="55.5" width="11.2" height="11.3" rx="1" fill="#bfe1f6" stroke="#a6d6f0" stroke-width="0.5"/>
<path d="M498.9 58.6 L502.9 62 L501.1 62.3 L502.3 64.2 L501.5 64.6 L500.4 62.8 L499 64 Z" fill="#3a3a3a"/>
<path d="M496.8 76 H500.4 V71.2 H505.2" fill="none" stroke="#d6203a" stroke-width="0.8"/>
<path d="M497.2 69.8 H498.6 V75 M503.2 69.2 V77.2 M501.8 72.4 H505.4 M501.8 74.2 H505.4" fill="none" stroke="#4d4d4d" stroke-width="0.6"/>
<rect x="497" y="80.3" width="8" height="0.6" fill="#d4d5d6"/>
<rect x="497" y="263.3" width="8" height="0.6" fill="#d4d5d6"/>
<path d="M498 84 L505.2 88.3 L498 92.6 Z" fill="none" stroke="#4d4d4d" stroke-width="0.8"/><path d="M496.6 86 H498 M496.6 90.6 H498 M499 87 L500.6 88.6 L499 90" fill="none" stroke="#4d4d4d" stroke-width="0.5"/>
<path d="M501 96.2 V101.6 M497 101.6 H505 M498.4 103 H503.6 M499.8 104.4 H502.2" fill="none" stroke="#6e6e6e" stroke-width="0.8"/>
<line x1="497" y1="115.7" x2="505" y2="108.7" stroke="#1a7ccc" stroke-width="0.6"/>
<line x1="497" y1="127.5" x2="505" y2="121.3" stroke="#1a7ccc" stroke-width="1.1"/>
<path d="M497 133 H502 M497 135.8 H501" stroke="#6e6e6e" stroke-width="0.7"/><path d="M501.2 132.6 L504 136.4 M500.2 134.4 L503.6 139.4" stroke="#1a7ccc" stroke-width="0.5"/><line x1="504.4" y1="132" x2="504.4" y2="140.4" stroke="#6e6e6e" stroke-width="0.8"/>
<line x1="496.6" y1="148" x2="500.8" y2="148" stroke="#6e6e6e" stroke-width="0.6"/><path d="M499 146.2 L502.8 149.8 M502.8 146.2 L499 149.8" stroke="#1a7ccc" stroke-width="0.8"/>
<line x1="500.8" y1="155.8" x2="500.8" y2="164.4" stroke="#888" stroke-width="0.7"/><line x1="496.8" y1="160" x2="500.8" y2="160" stroke="#888" stroke-width="0.6"/><circle cx="500.8" cy="160" r="1.3" fill="#1a7ccc"/>
<path d="M499 173.8 L501 168.8 L503 173.8 M499.8 172 H502.2" fill="none" stroke="#4d4d4d" stroke-width="0.55"/><line x1="497" y1="174.6" x2="505" y2="174.6" stroke="#4d4d4d" stroke-width="0.6"/>
<circle cx="498.8" cy="183" r="1.6" fill="none" stroke="#4d4d4d" stroke-width="0.6"/><path d="M499.6 184.4 L500 186.2 M501.4 181 V185.8 L504 181 V185.8" fill="none" stroke="#4d4d4d" stroke-width="0.6"/>
<rect x="497" y="193" width="8" height="7" fill="#8a8a8a"/>
<rect x="497.0" y="193.0" width="0.8" height="0.7" fill="#f0f0f0"/><rect x="497.0" y="195.8" width="0.8" height="0.7" fill="#f0f0f0"/><rect x="497.0" y="198.6" width="0.8" height="0.7" fill="#f0f0f0"/><rect x="498.6" y="194.4" width="0.8" height="0.7" fill="#f0f0f0"/><rect x="498.6" y="197.2" width="0.8" height="0.7" fill="#f0f0f0"/><rect x="500.2" y="193.0" width="0.8" height="0.7" fill="#f0f0f0"/><rect x="500.2" y="195.8" width="0.8" height="0.7" fill="#f0f0f0"/><rect x="500.2" y="198.6" width="0.8" height="0.7" fill="#f0f0f0"/><rect x="501.8" y="194.4" width="0.8" height="0.7" fill="#f0f0f0"/><rect x="501.8" y="197.2" width="0.8" height="0.7" fill="#f0f0f0"/><rect x="503.4" y="193.0" width="0.8" height="0.7" fill="#f0f0f0"/><rect x="503.4" y="195.8" width="0.8" height="0.7" fill="#f0f0f0"/><rect x="503.4" y="198.6" width="0.8" height="0.7" fill="#f0f0f0"/>
<path d="M497 193 H500.6 L497 196.2 Z" fill="#eff0f1"/>
<path d="M497 204.6 H502.4 L505.2 208 L502.4 211.4 H497 Z" fill="none" stroke="#6e6e6e" stroke-width="0.7"/><path d="M498.6 210 L500.2 205.8 L501.8 210" fill="none" stroke="#6e6e6e" stroke-width="0.5"/><circle cx="505.2" cy="208" r="0.6" fill="#1a7ccc"/>
<text x="496.8" y="222" font-size="5" font-family="Liberation Sans" fill="#4d4d4d">A</text><path d="M503.8 218.6 A1.5 1.7 0 1 0 503.8 221.4 M503.6 220 H505.6" fill="none" stroke="#4d4d4d" stroke-width="0.6"/>
<rect x="496.6" y="227.4" width="8.2" height="8" rx="0.8" fill="#d8c9a3"/><path d="M497.6 230.6 L499.8 229 H502" fill="none" stroke="#444" stroke-width="0.5"/><circle cx="502.9" cy="234" r="2.4" fill="#d6203a"/><circle cx="502.9" cy="234" r="0.8" fill="#fff"/>
<path d="M497 240 H502.6 L505.4 243.6 L502.6 247.2 H497 Z" fill="#eef6fc" stroke="#1a7ccc" stroke-width="0.9"/><path d="M499.2 245.8 L500.6 241.6 L502 245.8" fill="none" stroke="#6e6e6e" stroke-width="0.5"/>
<rect x="496.6" y="251" width="7.8" height="7.6" rx="0.6" fill="#d8c9a3"/><path d="M497.6 254 H502 M497.6 255.6 H500" stroke="#777" stroke-width="0.4"/><circle cx="502.9" cy="257.4" r="2.2" fill="#d6203a"/><rect x="502.1" y="256.8" width="1.6" height="1.4" fill="#fff"/>
<path d="M497.4 268 H504.4 M500.9 268 V274.6" stroke="#4d4d4d" stroke-width="1.2"/>
<rect x="497.4" y="279.8" width="7.4" height="6.2" rx="0.8" fill="#bdbdbd" stroke="#777" stroke-width="0.7"/>
<rect x="497.2" y="291.2" width="7.8" height="7.8" fill="#8a8a8a"/><line x1="499.4" y1="292.4" x2="499.4" y2="299" stroke="#eee" stroke-width="0.45"/><line x1="501.2" y1="292.4" x2="501.2" y2="299" stroke="#eee" stroke-width="0.45"/><line x1="503" y1="292.4" x2="503" y2="299" stroke="#eee" stroke-width="0.45"/><line x1="497.2" y1="294" x2="505" y2="294" stroke="#eee" stroke-width="0.45"/><line x1="497.2" y1="296" x2="505" y2="296" stroke="#eee" stroke-width="0.45"/><line x1="497.2" y1="298" x2="505" y2="298" stroke="#eee" stroke-width="0.45"/>
<rect x="497.4" y="303.6" width="7.4" height="6.4" rx="0.6" fill="#bdbdbd" stroke="#666" stroke-width="0.7"/>
<circle cx="500.9" cy="318.8" r="3.6" fill="#bdbdbd" stroke="#666" stroke-width="0.7"/>
<path d="M497.2 334.6 Q498.4 328.6 505 327.6" fill="none" stroke="#4d4d4d" stroke-width="0.7"/>
<line x1="497" y1="342" x2="505" y2="342" stroke="#1a7ccc" stroke-width="0.6"/><path d="M498.4 346.2 Q498.6 342.4 501.4 342.2 Q503.6 342 503.8 339.4" fill="none" stroke="#4d4d4d" stroke-width="0.55"/>
<line x1="497" y1="358.6" x2="505" y2="351.4" stroke="#4d4d4d" stroke-width="0.7"/>
<rect x="497" y="362.6" width="8" height="8.4" rx="1" fill="#444"/><path d="M498.2 369.8 L500.4 366.6 L502 368.4 L502.8 367.6 L504 369.8 Z" fill="#fafafa"/><circle cx="503" cy="365" r="0.8" fill="#fafafa"/>
<path d="M497.8 374.6 L501.8 377.8 L500.2 378.4 L500.6 380 L499.8 380.2 L499.4 378.6 L498 379.6 Z" fill="#333"/><circle cx="502.9" cy="380.2" r="2.6" fill="#d6203a"/><circle cx="502.9" cy="380.2" r="1" fill="#fff"/>
</svg>

<div class="hdr" style="left:509px;top:54.2px;width:166.2px;height:6.6px"><span>Design Blocks</span></div>
<div class="a" style="left:509px;top:60.5px;width:166.6px;height:166px;background:#fcfcfc"></div>
<div class="a" style="left:509px;top:228px;width:166.6px;height:78px;background:#fcfcfc"></div>
<div class="a" style="left:510.2px;top:308.2px;width:164.5px;height:89px;background:#f5f4ef"></div>
<div class="a" style="left:509.4px;top:397.2px;width:165.4px;height:28.2px;background:#dfe0e2"></div>
<div class="a" style="left:509px;top:60px;width:0.8px;height:365.4px;background:#d6d7d9"></div>
<svg class="a" width="700" height="481" viewBox="0 0 700 481" style="left:0;top:0"><path d="M665.4 450.6 L673.6 442.6 V450.6 Z" fill="#c9cbcd"/><path d="M667 450.6 L673.6 444 M669 450.6 L673.6 446 M671 450.6 L673.6 448" stroke="#eff0f1" stroke-width="0.5"/><rect x="674.8" y="30" width="0.8" height="422" fill="#dadbdc"/></svg>
<svg class="a" width="700" height="481" viewBox="0 0 700 481" style="left:0;top:0">
<defs><pattern id="pd" x="550.5" y="338.5" width="8" height="7.95" patternUnits="userSpaceOnUse"><rect x="0" y="0" width="1.1" height="1.1" fill="#eae9e4"/></pattern></defs>
<rect x="510" y="308.2" width="164.6" height="89" fill="url(#pd)"/>
<g fill="#dcdbd6"><rect x="510.50" y="338.4" width="1.1" height="1.1"/><rect x="518.50" y="338.4" width="1.1" height="1.1"/><rect x="526.50" y="338.4" width="1.1" height="1.1"/><rect x="534.50" y="338.4" width="1.1" height="1.1"/><rect x="542.50" y="338.4" width="1.1" height="1.1"/><rect x="550.50" y="338.4" width="1.1" height="1.1"/><rect x="558.50" y="338.4" width="1.1" height="1.1"/><rect x="566.50" y="338.4" width="1.1" height="1.1"/><rect x="574.50" y="338.4" width="1.1" height="1.1"/><rect x="582.50" y="338.4" width="1.1" height="1.1"/><rect x="590.50" y="338.4" width="1.1" height="1.1"/><rect x="598.50" y="338.4" width="1.1" height="1.1"/><rect x="606.50" y="338.4" width="1.1" height="1.1"/><rect x="614.50" y="338.4" width="1.1" height="1.1"/><rect x="622.50" y="338.4" width="1.1" height="1.1"/><rect x="630.50" y="338.4" width="1.1" height="1.1"/><rect x="638.50" y="338.4" width="1.1" height="1.1"/><rect x="646.50" y="338.4" width="1.1" height="1.1"/><rect x="654.50" y="338.4" width="1.1" height="1.1"/><rect x="662.50" y="338.4" width="1.1" height="1.1"/><rect x="670.50" y="338.4" width="1.1" height="1.1"/><rect x="558.50" y="314.55" width="1.1" height="1.1"/><rect x="558.50" y="322.50" width="1.1" height="1.1"/><rect x="558.50" y="330.45" width="1.1" height="1.1"/><rect x="558.50" y="338.40" width="1.1" height="1.1"/><rect x="558.50" y="346.35" width="1.1" height="1.1"/><rect x="558.50" y="354.30" width="1.1" height="1.1"/><rect x="558.50" y="362.25" width="1.1" height="1.1"/><rect x="558.50" y="370.20" width="1.1" height="1.1"/><rect x="558.50" y="378.15" width="1.1" height="1.1"/><rect x="558.50" y="386.10" width="1.1" height="1.1"/><rect x="558.50" y="394.05" width="1.1" height="1.1"/><rect x="638.50" y="314.55" width="1.1" height="1.1"/><rect x="638.50" y="322.50" width="1.1" height="1.1"/><rect x="638.50" y="330.45" width="1.1" height="1.1"/><rect x="638.50" y="338.40" width="1.1" height="1.1"/><rect x="638.50" y="346.35" width="1.1" height="1.1"/><rect x="638.50" y="354.30" width="1.1" height="1.1"/><rect x="638.50" y="362.25" width="1.1" height="1.1"/><rect x="638.50" y="370.20" width="1.1" height="1.1"/><rect x="638.50" y="378.15" width="1.1" height="1.1"/><rect x="638.50" y="386.10" width="1.1" height="1.1"/><rect x="638.50" y="394.05" width="1.1" height="1.1"/></g>
<text x="551.3" y="325.2" font-size="5.3" fill="#2f8585" font-family="Liberation Sans" text-anchor="middle" textLength="10.9" lengthAdjust="spacingAndGlyphs">VCC</text>
<text x="578.9" y="321.1" font-size="5.3" fill="#2f8585" font-family="Liberation Sans" text-anchor="middle" textLength="6.5" lengthAdjust="spacingAndGlyphs">R1</text>
<text x="579.1" y="330.2" font-size="5.6" fill="#2f8585" font-family="Liberation Sans" text-anchor="middle" textLength="22" lengthAdjust="spacingAndGlyphs">${RVAL}</text>
<text x="615.7" y="357" font-size="5.3" fill="#2f8585" font-family="Liberation Sans" text-anchor="start" textLength="7.4" lengthAdjust="spacingAndGlyphs">C9</text>
<text x="615.7" y="366.2" font-size="5.6" fill="#2f8585" font-family="Liberation Sans" text-anchor="start" textLength="22.3" lengthAdjust="spacingAndGlyphs">${CVAL}</text>
<text x="603.1" y="389.4" font-size="5.3" fill="#2f8585" font-family="Liberation Sans" text-anchor="middle" textLength="11.5" lengthAdjust="spacingAndGlyphs">GND</text>
<path d="M551.1 338.4 V331.2 M549 334.9 L551.1 331.2 L553.4 334.9" fill="none" stroke="#bf6570" stroke-width="0.7"/>
<line x1="551.1" y1="338.7" x2="568.5" y2="338.7" stroke="#8fcf8f" stroke-width="0.8"/>
<line x1="568.5" y1="338.7" x2="570.8" y2="338.7" stroke="#bf6570" stroke-width="0.7"/>
<line x1="587.6" y1="338.7" x2="590" y2="338.7" stroke="#bf6570" stroke-width="0.7"/>
<line x1="590" y1="338.7" x2="608.2" y2="338.7" stroke="#8fcf8f" stroke-width="0.8"/><circle cx="607.4" cy="338.8" r="0.7" fill="#8fcf8f"/>
<line x1="602.9" y1="339" x2="602.9" y2="347" stroke="#8fcf8f" stroke-width="0.8"/>
<line x1="602.9" y1="347" x2="602.9" y2="356" stroke="#bf6570" stroke-width="0.7"/>
<line x1="602.9" y1="361.6" x2="602.9" y2="373.9" stroke="#bf6570" stroke-width="0.7"/>
<circle cx="602.9" cy="338.9" r="1.3" fill="#1f9a2e"/>
<rect x="571.2" y="335.7" width="16" height="6.5" rx="0.4" fill="#fdfdfa" stroke="#a8323e" stroke-width="0.9"/>
<rect x="596" y="355.7" width="14.3" height="1.5" fill="#a8323e"/><rect x="596" y="360.6" width="14.3" height="1.5" fill="#a8323e"/>
<path d="M598.8 373.9 H607.3 L603.1 378.4 Z" fill="none" stroke="#bf6570" stroke-width="0.7"/>
</svg>
<svg class="a" width="700" height="481" viewBox="0 0 700 481" style="left:0;top:0">
<line x1="30" y1="226" x2="38" y2="226" stroke="#bbb" stroke-width="0.5" stroke-dasharray="0.8 0.6"/>
<circle cx="40.3" cy="226" r="2.3" fill="#1d6fb8"/>
<rect x="44" y="220.8" width="38" height="10" fill="#3daee9"/>
<text x="45.2" y="227.95" font-size="5.9" fill="#fcfcfc" font-family="Liberation Sans" font-weight="bold" textLength="35.6" lengthAdjust="spacingAndGlyphs">Root (page 1)</text>
<rect x="28.1" y="382.7" width="5.7" height="5.7" rx="1.1" fill="#bfe0f4"/><path d="M29.20 385.66 L30.38 387.15 L32.80 384.30" fill="none" stroke="#2a2d30" stroke-width="1.05"/>
<text x="35.4" y="387.25" font-size="5.3" fill="#232629" font-family="Liberation Sans" >All items</text>
<rect x="28.1" y="391.2" width="5.7" height="5.7" rx="1.1" fill="#bfe0f4"/><path d="M29.20 394.16 L30.38 395.65 L32.80 392.80" fill="none" stroke="#2a2d30" stroke-width="1.05"/>
<text x="35.4" y="395.75" font-size="5.3" fill="#232629" font-family="Liberation Sans" >Symbols</text>
<rect x="62" y="391.2" width="5.7" height="5.7" rx="1.1" fill="#bfe0f4"/><path d="M63.10 394.16 L64.28 395.65 L66.70 392.80" fill="none" stroke="#2a2d30" stroke-width="1.05"/>
<text x="69.2" y="395.75" font-size="5.3" fill="#232629" font-family="Liberation Sans" >Pins</text>
<rect x="28.1" y="399.8" width="5.7" height="5.7" rx="1.1" fill="#bfe0f4"/><path d="M29.20 402.76 L30.38 404.25 L32.80 401.40" fill="none" stroke="#2a2d30" stroke-width="1.05"/>
<text x="35.4" y="404.35" font-size="5.3" fill="#232629" font-family="Liberation Sans" >Wires</text>
<rect x="62" y="399.8" width="5.7" height="5.7" rx="1.1" fill="#bfe0f4"/><path d="M63.10 402.76 L64.28 404.25 L66.70 401.40" fill="none" stroke="#2a2d30" stroke-width="1.05"/>
<text x="69.2" y="404.35" font-size="5.3" fill="#232629" font-family="Liberation Sans" >Labels</text>
<rect x="28.1" y="408.4" width="5.7" height="5.7" rx="1.1" fill="#bfe0f4"/><path d="M29.20 411.36 L30.38 412.85 L32.80 410.00" fill="none" stroke="#2a2d30" stroke-width="1.05"/>
<text x="35.4" y="412.95" font-size="5.3" fill="#232629" font-family="Liberation Sans" >Graphics</text>
<rect x="62" y="408.4" width="5.7" height="5.7" rx="1.1" fill="#bfe0f4"/><path d="M63.10 411.36 L64.28 412.85 L66.70 410.00" fill="none" stroke="#2a2d30" stroke-width="1.05"/>
<text x="69.2" y="412.95" font-size="5.3" fill="#232629" font-family="Liberation Sans" >Images</text>
<rect x="28.1" y="417.0" width="5.7" height="5.7" rx="1.1" fill="#bfe0f4"/><path d="M29.20 419.96 L30.38 421.45 L32.80 418.60" fill="none" stroke="#2a2d30" stroke-width="1.05"/>
<text x="35.4" y="421.55" font-size="5.3" fill="#232629" font-family="Liberation Sans" >Text</text>
<rect x="62" y="417.0" width="5.7" height="5.7" rx="1.1" fill="#bfe0f4"/><path d="M63.10 419.96 L64.28 421.45 L66.70 418.60" fill="none" stroke="#2a2d30" stroke-width="1.05"/>
<text x="69.2" y="421.55" font-size="5.3" fill="#232629" font-family="Liberation Sans" >Other items</text>
<rect x="510.1" y="60.9" width="153" height="10.4" fill="#fcfcfc" stroke="#d4d6d8" stroke-width="0.5"/>
<circle cx="515.2" cy="65.6" r="1.5" fill="none" stroke="#444" stroke-width="0.6"/><line x1="516.3" y1="66.7" x2="517.8" y2="68.2" stroke="#444" stroke-width="0.7"/>
<text x="521" y="68.18" font-size="5.7" fill="#9a9c9e" font-family="Liberation Sans" >Filter</text>
<rect x="665.5" y="60.9" width="9" height="10.4" fill="#eff0f1"/>
<path d="M667.4 62.8 V67.4 M666.8 67.8 H669.4 M670.8 63 V67.6 M669.6 66.2 L670.8 67.6 L672 66.2 M668.4 64.2 H669" fill="none" stroke="#333" stroke-width="0.5"/>
<rect x="509.5" y="71.3" width="165.5" height="2.5" fill="#dcdde0"/>
<rect x="509.5" y="73.8" width="165.5" height="12.8" fill="#eff0f1"/>
<line x1="509.5" y1="86.4" x2="675" y2="86.4" stroke="#d6d8da" stroke-width="0.6"/>
<line x1="572.2" y1="74" x2="572.2" y2="86.4" stroke="#d6d8da" stroke-width="0.6"/>
<text x="512.7" y="82.51" font-size="5.8" fill="#232629" font-family="Liberation Sans" >Item</text>
<text x="575" y="82.51" font-size="5.8" fill="#232629" font-family="Liberation Sans" >Description</text>
<rect x="509.8" y="133.3" width="164.8" height="11.4" fill="#3daee9"/>
<text x="516.6" y="94.65" font-size="5.6" fill="#232629" font-family="Liberation Sans" >-- Recently Used --</text>
<text x="516.3" y="106.48" font-size="5.7" fill="#232629" font-family="Liberation Sans" >a</text>
<path d="M511.6 114.4 L513.4 116 L511.6 117.6" fill="none" stroke="#333" stroke-width="0.6"/>
<text x="516.3" y="117.88" font-size="5.7" fill="#232629" font-family="Liberation Sans" >blocks</text>
<text x="572.9" y="117.88" font-size="5.7" fill="#232629" font-family="Liberation Sans" >global test</text>
<path d="M511.1 127 L512.8 128.7 L514.5 127" fill="none" stroke="#333" stroke-width="0.6"/>
<text x="516.3" y="129.68" font-size="5.7" fill="#232629" font-family="Liberation Sans" >Parametric Test</text>
<text x="529.4" y="141.18" font-size="5.7" fill="#fcfcfc" font-family="Liberation Sans" >Parametric Test</text>
<text x="529.4" y="152.48" font-size="5.7" fill="#232629" font-family="Liberation Sans" >RC2</text>
<text x="572.9" y="152.48" font-size="5.7" fill="#232629" font-family="Liberation Sans" >RC Filter</text>
<text x="529.4" y="164.08" font-size="5.7" fill="#232629" font-family="Liberation Sans" >power_param</text>
<text x="572.9" y="164.08" font-size="5.7" fill="#232629" font-family="Liberation Sans" >one two three</text>
<rect x="509.5" y="225.9" width="165.5" height="2" fill="#dcdde0"/>
<text x="513.4" y="237.85" font-size="5.6" fill="#232629" font-family="Liberation Sans" font-weight="bold">Parametric Test</text>
<line x1="513.4" y1="255.5" x2="670.5" y2="255.5" stroke="#b8babc" stroke-width="0.6"/>
<text x="515.3" y="271.68" font-size="5.4" fill="#232629" font-family="Liberation Sans" font-weight="bold" textLength="26" lengthAdjust="spacingAndGlyphs">Keywords</text>
<text x="515.3" y="282.42" font-size="5.5" fill="#232629" font-family="Liberation Sans" font-weight="bold" textLength="42.4" lengthAdjust="spacingAndGlyphs">Documentation</text>
<rect x="509.5" y="306.4" width="165.5" height="1.9" fill="#d4d5d7"/>
<rect x="515.5" y="399.6" width="4.800000000000001" height="4.800000000000001" rx="1.1" fill="#f6f6f7" stroke="#c2c4c6" stroke-width="0.6"/>
<text x="522.4" y="403.85" font-size="5.6" fill="#232629" font-family="Liberation Sans" >Place repeated copies</text>
<rect x="515.2" y="408.90000000000003" width="5.4" height="5.4" rx="1.1" fill="#bfe0f4"/><path d="M516.30 411.71 L517.36 413.11 L519.60 410.41" fill="none" stroke="#2a2d30" stroke-width="1.05"/>
<text x="522.4" y="413.45" font-size="5.6" fill="#232629" font-family="Liberation Sans" >Place as sheet</text>
<rect x="515.5" y="418.3" width="4.800000000000001" height="4.800000000000001" rx="1.1" fill="#f6f6f7" stroke="#c2c4c6" stroke-width="0.6"/>
<text x="522.4" y="422.55" font-size="5.6" fill="#232629" font-family="Liberation Sans" >Keep annotations</text>
<text x="193.6" y="448.99" font-size="5.42" fill="#2a2d30" font-family="Liberation Sans" >Z 0.83</text>
<text x="225.6" y="448.99" font-size="5.42" fill="#2a2d30" font-family="Liberation Sans" xml:space="preserve">X 7000  Y -300</text>
<text x="298.6" y="448.99" font-size="5.42" fill="#2a2d30" font-family="Liberation Sans" xml:space="preserve">dx 7000  dy -300  dist 7006</text>
<text x="416.8" y="448.99" font-size="5.42" fill="#2a2d30" font-family="Liberation Sans" >grid 50</text>
<text x="500.8" y="448.99" font-size="5.42" fill="#2a2d30" font-family="Liberation Sans" >mils</text>
</svg>

</body></html>
